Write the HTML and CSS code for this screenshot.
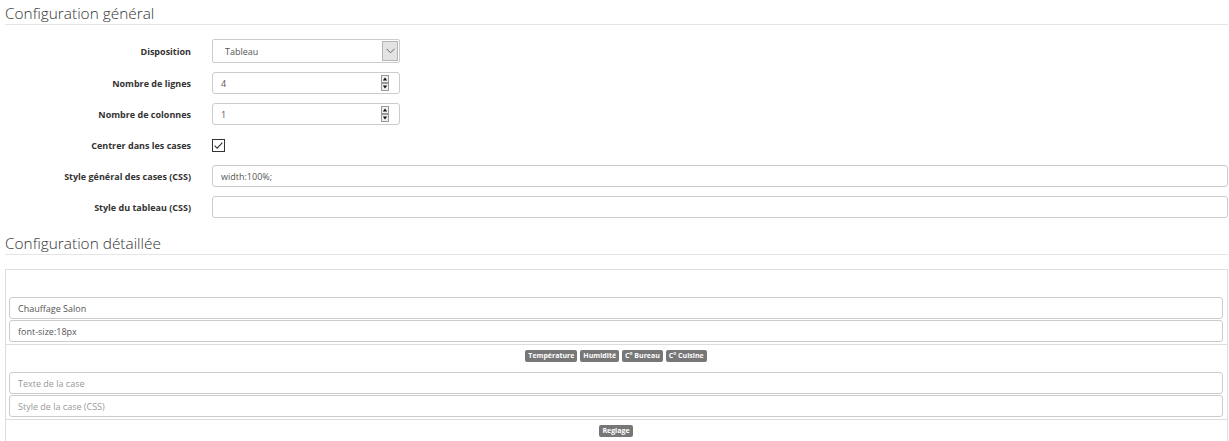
FILE: index.html
```html
<!DOCTYPE html>
<html lang="fr">
<head>
<meta charset="utf-8">
<title>Configuration</title>
<link rel="stylesheet" href="styles.css">
</head>
<body>
<div class="page">
  <div class="legend legend-first">Configuration général</div>
  <div class="form">
    <div class="row row-select">
      <label class="lbl">Disposition</label>
      <div class="ctl">
        <div class="select">
          <span class="select-text">Tableau</span>
          <span class="select-btn">
            <svg width="9" height="6" viewBox="0 0 9 6"><path d="M0.5 0.8 L4.5 4.8 L8.5 0.8" fill="none" stroke="#666" stroke-width="1"/></svg>
          </span>
        </div>
      </div>
    </div>
    <div class="row">
      <label class="lbl">Nombre de lignes</label>
      <div class="ctl">
        <div class="input input-short"><span>4</span>
          <span class="spin">
            <svg width="8" height="16" viewBox="0 0 8 16"><rect x="0.5" y="0.5" width="7" height="7" fill="#f0f0f0" stroke="#999"/><rect x="0.5" y="8.5" width="7" height="7" fill="#f0f0f0" stroke="#999"/><path d="M4 2.5 L6.2 5.5 L1.8 5.5 Z" fill="#111"/><path d="M1.8 10.5 L6.2 10.5 L4 13.5 Z" fill="#111"/></svg>
          </span>
        </div>
      </div>
    </div>
    <div class="row">
      <label class="lbl">Nombre de colonnes</label>
      <div class="ctl">
        <div class="input input-short"><span>1</span>
          <span class="spin">
            <svg width="8" height="16" viewBox="0 0 8 16"><rect x="0.5" y="0.5" width="7" height="7" fill="#f0f0f0" stroke="#999"/><rect x="0.5" y="8.5" width="7" height="7" fill="#f0f0f0" stroke="#999"/><path d="M4 2.5 L6.2 5.5 L1.8 5.5 Z" fill="#111"/><path d="M1.8 10.5 L6.2 10.5 L4 13.5 Z" fill="#111"/></svg>
          </span>
        </div>
      </div>
    </div>
    <div class="row">
      <label class="lbl">Centrer dans les cases</label>
      <div class="ctl">
        <span class="checkbox">
          <svg width="13" height="13" viewBox="0 0 13 13"><rect x="0.5" y="0.5" width="12" height="12" fill="#fff" stroke="#333"/><path d="M2.6 6.6 L5.1 9.1 L10.4 3.6" fill="none" stroke="#333" stroke-width="1.1"/></svg>
        </span>
      </div>
    </div>
    <div class="row">
      <label class="lbl">Style général des cases (CSS)</label>
      <div class="ctl grow">
        <div class="input"><span>width:100%;</span></div>
      </div>
    </div>
    <div class="row">
      <label class="lbl">Style du tableau (CSS)</label>
      <div class="ctl grow">
        <div class="input"><span></span></div>
      </div>
    </div>
  </div>

  <div class="legend legend-second">Configuration détaillée</div>

  <div class="table">
    <div class="cell">
      <div class="badges"></div>
      <div class="input field"><span>Chauffage Salon</span></div>
      <div class="input field"><span>font-size:18px</span></div>
    </div>
    <div class="cell">
      <div class="badges">
        <span class="badge">Température</span>
        <span class="badge">Humidité</span>
        <span class="badge">C° Bureau</span>
        <span class="badge">C° Cuisine</span>
      </div>
      <div class="input field"><span class="ph">Texte de la case</span></div>
      <div class="input field"><span class="ph">Style de la case (CSS)</span></div>
    </div>
    <div class="cell">
      <div class="badges">
        <span class="badge">Reglage</span>
      </div>
    </div>
  </div>
</div>
</body>
</html>
```

FILE: styles.css
```css
* { box-sizing: border-box; }
html, body {
  margin: 0;
  padding: 0;
  background: #fff;
  font-family: "Open Sans", "Liberation Sans", sans-serif;
  color: #333;
}
.page {
  padding: 0 1px 0 5px;
}
.legend {
  font-size: 15.4px;
  font-weight: 300;
  line-height: 20px;
  color: #333;
  border-bottom: 1px solid #e5e5e5;
  padding-top: 4px;
}
.legend-first { margin-bottom: 14px; }
.legend-second { margin-top: 12px; margin-bottom: 14px; }

.form {
  display: flex;
  flex-direction: column;
  gap: 9px;
}
.row {
  display: flex;
  align-items: center;
  height: 22px;
}
.row-select { height: 24px; }
.lbl {
  width: 186px;
  flex: none;
  text-align: right;
  font-size: 9px;
  font-weight: 700;
  color: #333;
  margin-right: 21px;
}
.ctl { display: flex; align-items: center; }
.ctl.grow { flex: 1; }
.ctl.grow .input { width: 100%; }

.select {
  width: 188px;
  height: 24px;
  border: 1px solid #ccc;
  border-radius: 2px;
  display: flex;
  align-items: center;
  justify-content: space-between;
  padding: 0 1px 0 12px;
  font-size: 9px;
  color: #555;
  background: #fff;
}
.select-btn {
  width: 16px;
  height: 20px;
  background: #e3e3e3;
  border: 1px solid #b5b5b5;
  display: flex;
  align-items: center;
  justify-content: center;
}
.input {
  height: 22px;
  border: 1px solid #ccc;
  border-radius: 3px;
  display: flex;
  align-items: center;
  padding: 0 8px;
  font-size: 9px;
  color: #555;
  background: #fff;
}
.input-short {
  width: 188px;
  justify-content: space-between;
  padding-right: 10px;
}
.spin { display: flex; }
.spin svg { display: block; }
.checkbox { display: flex; }
.checkbox svg { display: block; }
.ph { color: #999; }

.table {
  border: 1px solid #ddd;
  border-bottom: none;
}
.cell {
  border-bottom: 1px solid #ddd;
  padding: 0 4px 2px 3px;
}
.cell:last-child { border-bottom: none; height: 40px; }
.badges {
  height: 27px;
  padding-top: 5px;
  display: flex;
  justify-content: center;
  align-items: flex-start;
  gap: 3px;
}
.badge {
  display: inline-block;
  height: 12px;
  line-height: 12px;
  padding: 0 3px;
  border-radius: 2px;
  background: #777;
  color: #fff;
  font-size: 7px;
  font-weight: 700;
}
.field { margin-bottom: 1px; }
.field:last-child { margin-bottom: 0; }
```
